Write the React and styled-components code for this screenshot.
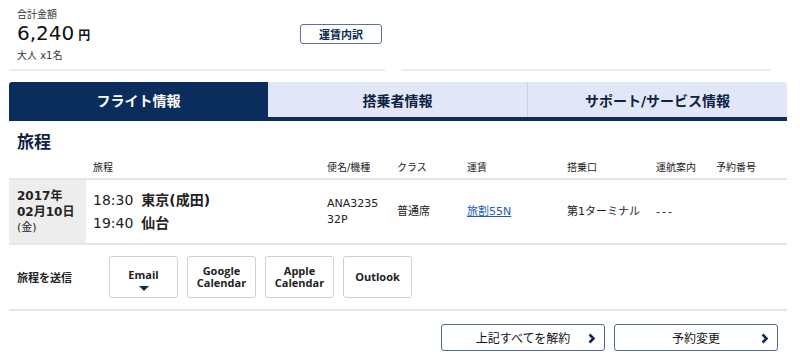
import React from "react";
import styled, { createGlobalStyle } from "styled-components";

const GlobalStyle = createGlobalStyle`
  body {
    margin: 0;
    background: #fff;
    font-family: "DejaVu Sans", "Noto Sans CJK JP", sans-serif;
    color: #222;
  }
`;

const Page = styled.div`
  width: 778px;
  padding-left: 9px;
`;

// Summary block
const Summary = styled.div`
  display: flex;
  align-items: flex-start;
  padding: 8px 0 0 8px;
  height: 69px;
  box-sizing: border-box;
`;

const TotalBlock = styled.div`
  width: 283px;
`;

const SmallLabel = styled.div`
  font-size: 10px;
  line-height: 13px;
  color: #333;
`;

const Amount = styled.div`
  font-size: 20px;
  line-height: 25px;
  color: #111;
  span {
    font-size: 12px;
    font-weight: bold;
    margin-left: 4px;
  }
`;

const OutlineButton = styled.button`
  margin-top: 16px;
  width: 82px;
  height: 20px;
  border: 1px solid #5b7394;
  border-radius: 3px;
  background: #fff;
  font-family: inherit;
  font-size: 11px;
  font-weight: bold;
  color: #0e2a52;
  padding: 0;
`;

const Dividers = styled.div`
  display: flex;
  gap: 16px;
  height: 2px;
  width: 761px;
  margin-bottom: 11px;
`;

const Divider = styled.div`
  flex: ${(p) => p.grow};
  background: #ececec;
`;

// Tabs
const Tabs = styled.div`
  display: grid;
  grid-template-columns: 259px 259px 260px;
  border-bottom: 4px solid #0a2d5e;
`;

const Tab = styled.div`
  height: 35px;
  display: flex;
  align-items: center;
  justify-content: center;
  font-size: 14px;
  font-weight: bold;
  background: ${(p) => (p.active ? "#0a2d5e" : "#e1e7f6")};
  color: ${(p) => (p.active ? "#fff" : "#0e2244")};
  border-left: ${(p) => (p.divider ? "1px solid #c9d2e8" : "none")};
  border-radius: ${(p) => p.radius || "0"};
`;

const Heading = styled.h2`
  margin: 0;
  padding: 9px 0 0 8px;
  font-size: 17px;
  line-height: 24px;
  font-weight: bold;
  color: #0e2244;
`;

// Itinerary table
const Row = styled.div`
  display: grid;
  grid-template-columns: 77px 234px 70px 70px 100px 89px 60px 78px;
  border-bottom: 2px solid #e6e6e6;
  height: ${(p) => p.h}px;
  align-items: ${(p) => p.align || "center"};
`;

const HeadCell = styled.div`
  padding-left: 7px;
  font-size: 10px;
  color: #222;
  white-space: nowrap;
`;

const DateCell = styled.div`
  background: #ededed;
  height: 100%;
  padding: 8px 0 0 8px;
  box-sizing: border-box;
  font-size: 12px;
  line-height: 16px;
  font-weight: bold;
  small {
    display: block;
    font-size: 11px;
    font-weight: normal;
  }
`;

const Cell = styled.div`
  align-self: center;
  padding-left: 7px;
  font-size: 11px;
  line-height: 16px;
  white-space: nowrap;
  letter-spacing: ${(p) => p.spacing || 0}px;
`;

const Route = styled.div`
  align-self: center;
  padding-left: 7px;
  font-size: 14px;
  line-height: 23px;
  b {
    margin-left: 8px;
  }
`;

const FareLink = styled.a`
  color: #2458c0;
  text-decoration: underline;
`;

// Send row
const SendRow = styled.div`
  display: flex;
  align-items: center;
  height: 64px;
  border-bottom: 2px solid #e6e6e6;
`;

const SendLabel = styled.div`
  width: 100px;
  padding-left: 8px;
  box-sizing: border-box;
  font-size: 11px;
  font-weight: bold;
`;

const SendButtons = styled.div`
  display: flex;
  gap: 9px;
`;

const SendButton = styled.button`
  width: 69px;
  height: 42px;
  border: 1px solid #cfcfcf;
  border-radius: 3px;
  background: #fff;
  font-family: "Open Sans", "Noto Sans CJK JP", sans-serif;
  font-size: 11px;
  line-height: 12px;
  font-weight: bold;
  color: #222;
  padding: 0;
  display: flex;
  flex-direction: column;
  align-items: center;
  justify-content: center;
`;

const ButtonText = styled.span`
  margin-top: ${(p) => p.offset || 0}px;
`;

const Caret = styled.span`
  margin-top: 5px;
  width: 0;
  height: 0;
  border-left: 5px solid transparent;
  border-right: 5px solid transparent;
  border-top: 5px solid #0a2d5e;
`;

// Footer actions
const Actions = styled.div`
  display: flex;
  justify-content: flex-end;
  gap: 9px;
  padding: 13px 9px 0 0;
`;

const ActionButton = styled.button`
  position: relative;
  width: 164px;
  height: 27px;
  border: 1px solid #4d6a91;
  border-radius: 3px;
  background: #fff;
  font-family: inherit;
  font-size: 12px;
  color: #111;
  padding: 0;
  svg {
    position: absolute;
    right: 8px;
    top: 8px;
  }
`;

const Chevron = () => (
  <svg width="8" height="11" viewBox="0 0 8 11">
    <path d="M1.5 1.5 L5.5 5.5 L1.5 9.5" stroke="#0e2a52" strokeWidth="2.6" fill="none" />
  </svg>
);

const cols = ["", "旅程", "便名/機種", "クラス", "運賃", "搭乗口", "運航案内", "予約番号"];

export default function App() {
  return (
    <Page>
      <GlobalStyle />
      <Summary>
        <TotalBlock>
          <SmallLabel>合計金額</SmallLabel>
          <Amount>
            6,240<span>円</span>
          </Amount>
          <SmallLabel>大人 x1名</SmallLabel>
        </TotalBlock>
        <OutlineButton>運賃内訳</OutlineButton>
      </Summary>
      <Dividers>
        <Divider grow="0 0 376px" />
        <Divider grow="1" />
      </Dividers>
      <Tabs>
        <Tab active radius="3px 0 0 0">フライト情報</Tab>
        <Tab>搭乗者情報</Tab>
        <Tab divider radius="0 4px 0 0">サポート/サービス情報</Tab>
      </Tabs>
      <Heading>旅程</Heading>
      <Row h={24}>
        {cols.map((c, i) => (
          <HeadCell key={i}>{c}</HeadCell>
        ))}
      </Row>
      <Row h={63} align="stretch">
        <DateCell>
          2017年
          <br />
          02月10日
          <small>(金)</small>
        </DateCell>
        <Route>
          <div>
            18:30<b>東京(成田)</b>
          </div>
          <div>
            19:40<b>仙台</b>
          </div>
        </Route>
        <Cell>
          ANA3235
          <br />
          32P
        </Cell>
        <Cell>普通席</Cell>
        <Cell>
          <FareLink href="#">旅割55N</FareLink>
        </Cell>
        <Cell>第1ターミナル</Cell>
        <Cell spacing={2}>---</Cell>
        <Cell />
      </Row>
      <SendRow>
        <SendLabel>旅程を送信</SendLabel>
        <SendButtons>
          <SendButton>
            <ButtonText offset={6}>Email</ButtonText>
            <Caret />
          </SendButton>
          <SendButton>
            Google
            <br />
            Calendar
          </SendButton>
          <SendButton>
            Apple
            <br />
            Calendar
          </SendButton>
          <SendButton>Outlook</SendButton>
        </SendButtons>
      </SendRow>
      <Actions>
        <ActionButton>
          上記すべてを解約
          <Chevron />
        </ActionButton>
        <ActionButton>
          予約変更
          <Chevron />
        </ActionButton>
      </Actions>
    </Page>
  );
}
